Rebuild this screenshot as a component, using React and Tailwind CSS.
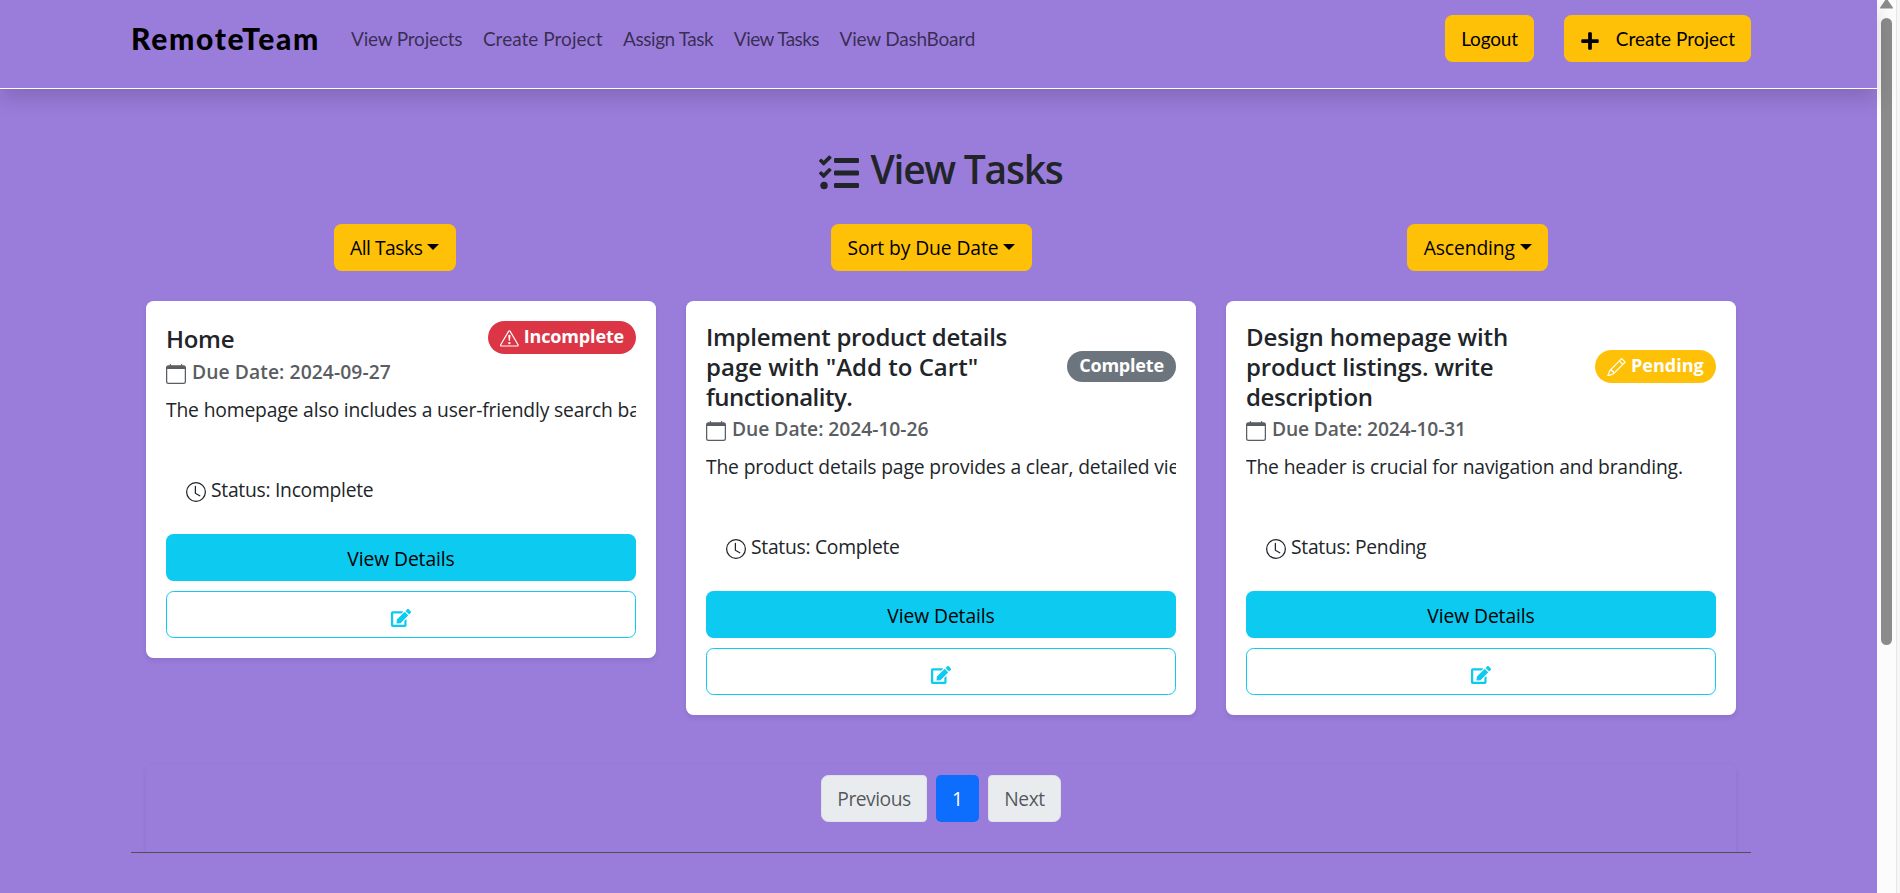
import { FaTasks, FaPlus, FaEdit } from "react-icons/fa";
import { BsCalendar, BsClock, BsExclamationTriangle, BsPencil } from "react-icons/bs";

const navLinks = [
  { label: "View Projects", tracking: "tracking-[-0.2px]" },
  { label: "Create Project", tracking: "tracking-[0.03px]" },
  { label: "Assign Task", tracking: "tracking-[-0.43px]" },
  { label: "View Tasks", tracking: "tracking-[-0.56px]" },
  { label: "View DashBoard", tracking: "tracking-[-0.22px]" },
];

const filters = [
  { label: "All Tasks", tracking: "tracking-[-0.48px]", width: "w-[122px]" },
  { label: "Sort by Due Date", tracking: "tracking-[-0.1px]", width: "w-[201px]" },
  { label: "Ascending", tracking: "tracking-[-0.1px]", width: "w-[141px]" },
];

const tasks = [
  {
    title: [{ text: "Home", tracking: "tracking-[-0.3px]" }],
    due: "2024-09-27",
    dueTracking: "tracking-[0.07px]",
    status: "Incomplete",
    badge: "bg-[#dc3545] h-[33px] w-[148px]",
    badgeTracking: "tracking-[-0.15px]",
    Icon: BsExclamationTriangle,
    description: "The homepage also includes a user-friendly search bar",
  },
  {
    title: [
      { text: "Implement product details", tracking: "tracking-[-0.3px]" },
      { text: 'page with "Add to Cart"', tracking: "tracking-[0.02px]" },
      { text: "functionality.", tracking: "tracking-[-0.5px]" },
    ],
    due: "2024-10-26",
    dueTracking: "tracking-[-0.05px]",
    status: "Complete",
    badge: "bg-[#6c757d] h-[31px] w-[109px]",
    badgeTracking: "tracking-[-0.2px]",
    Icon: null,
    description: "The product details page provides a clear, detailed view",
  },
  {
    title: [
      { text: "Design homepage with", tracking: "tracking-[-0.12px]" },
      { text: "product listings. write", tracking: "tracking-[-0.2px]" },
      { text: "description", tracking: "tracking-[-0.35px]" },
    ],
    due: "2024-10-31",
    dueTracking: "tracking-[-0.18px]",
    status: "Pending",
    badge: "bg-[#ffc107] h-[33px] w-[121px]",
    badgeTracking: "tracking-normal",
    Icon: BsPencil,
    description: "The header is crucial for navigation and branding.",
  },
];

function Navbar() {
  return (
    <header className="relative z-10 flex h-[89px] items-start border-b border-white bg-[#9a7cdb] pr-[126px] pl-[131px] pt-[15px] font-['Lato',sans-serif] text-[19px] shadow-[0_10px_20px_rgba(0,0,0,0.15)]">
      <div className="flex h-[47px] flex-1 items-center whitespace-nowrap">
        <a className="w-[220px] text-[30px] font-black tracking-[1.7px] text-black">RemoteTeam</a>
        <nav className="flex gap-[20.5px] pt-0.5 text-black/65">
          {navLinks.map((l) => (
            <a key={l.label} className={l.tracking}>{l.label}</a>
          ))}
        </nav>
      </div>
      <div className="flex gap-[30px] text-black">
        <button className="h-[47px] w-[89px] rounded-[7.5px] bg-[#ffc107] pt-0.5 tracking-[-0.2px]">Logout</button>
        <button className="flex h-[47px] w-[187px] items-center justify-between rounded-[7.5px] bg-[#ffc107] pr-4 pl-4">
          <FaPlus className="mt-1 size-5" />
          <span className="pt-0.5">Create Project</span>
        </button>
      </div>
    </header>
  );
}

function TaskCard({ task }) {
  const { Icon } = task;
  return (
    <article className="rounded-[7.5px] bg-white p-5 shadow-[0_2.5px_5px_rgba(0,0,0,0.075)]">
      <div className="flex items-center justify-between">
        <h5 className="text-[24px] leading-[30px] font-semibold">
          {task.title.map((t) => (
            <span key={t.text} className={`block translate-y-px whitespace-nowrap ${t.tracking}`}>{t.text}</span>
          ))}
        </h5>
        <span className={`flex items-center justify-center gap-[5px] rounded-full text-[18px] font-bold text-white ${task.badge}`}>
          {Icon && <Icon className="mt-0.5 size-[18.75px]" />}
          <span className={`pb-0.5 ${task.badgeTracking}`}>{task.status}</span>
        </span>
      </div>
      <div className={`mt-1.5 flex h-6 items-center gap-1.5 font-semibold text-[#5a5d61] ${task.dueTracking}`}>
        <BsCalendar className="mt-1 size-5" />
        <span>Due Date: {task.due}</span>
      </div>
      <p className="mt-[11px] h-[30px] overflow-hidden leading-[30px] tracking-[-0.16px] whitespace-nowrap">{task.description}</p>
      <div className="mt-[50px] flex h-[30px] items-center gap-[5px] pl-5 tracking-[-0.27px]">
        <BsClock className="mt-1 size-5" />
        <span>Status: {task.status}</span>
      </div>
      <div className="mt-[29px] flex flex-col gap-2.5">
        <button className="h-[47px] rounded-[7.5px] bg-[#0dcaf0] pt-[3px] tracking-[-0.1px] text-black">View Details</button>
        <button className="flex h-[47px] items-center justify-center rounded-[7.5px] border border-[#0dcaf0] pt-1.5 text-[#0dcaf0]">
          <FaEdit className="size-5" />
        </button>
      </div>
    </article>
  );
}

function Scrollbar() {
  return (
    <div className="flex w-[23px] shrink-0 bg-[#fcfcfc]">
      <div className="flex w-5 flex-col items-center border-r border-[#e6e6e6]">
        <svg viewBox="0 0 13 9" className="h-[9px] w-[13px] fill-[#8b8b8b]">
          <path d="M5.3 0h2.4l5 7.2c.5.8.2 1.4-.7 1.4H1c-.9 0-1.200-.6-.7-1.400z" />
        </svg>
        <div className="mt-[9px] h-[627px] w-[11px] rounded-full bg-[#8b8b8b]" />
      </div>
      <div className="flex-1 bg-[#f7f7f7]" />
    </div>
  );
}

export default function App() {
  return (
    <div className="flex h-[893px] w-[1900px] overflow-hidden font-['Open_Sans',sans-serif] text-[19.3px] text-[#212529]">
      <div className="w-[1877px] bg-[#9a7cdb]">
        <Navbar />
        <main className="ml-[131px] w-[1620px] border-b border-[#4d5154] px-[15px]">
          <h1 className="flex h-[135px] items-start justify-center gap-[11px] pt-[55px] text-[39px] leading-[50px] font-semibold tracking-[-1.25px]">
            <FaTasks className="mt-[9px] size-10" />
            View Tasks
          </h1>
          <div className="flex justify-around">
            {filters.map((f) => (
              <button key={f.label} className={`flex h-[47px] items-center justify-center gap-[5px] rounded-[7.5px] bg-[#ffc107] text-black ${f.width}`}>
                <span className={`pt-[1.5px] ${f.tracking}`}>{f.label}</span>
                <span className="mb-px border-x-[6px] border-t-[6px] border-x-transparent border-t-black" />
              </button>
            ))}
          </div>
          <div className="mt-[30px] grid h-[414px] grid-cols-3 items-start gap-[30px]">
            {tasks.map((t) => (
              <TaskCard key={t.due} task={t} />
            ))}
          </div>
          <div className="mt-[49px] flex h-[88px] items-start justify-center gap-[9px] rounded-t-[7.5px] pt-[11px] shadow-[0_2.5px_5px_rgba(0,0,0,0.075)] [clip-path:inset(-10px_-10px_0_-10px)]">
            <button className="h-[47px] w-[106px] rounded-l-[7.5px] rounded-r-[4px] border border-[#dee2e6] bg-[#e9ecef] pt-0.5 tracking-[-0.5px] text-[#212529]/75">Previous</button>
            <button className="h-[47px] w-[43px] rounded-[5px] bg-[#0d6efd] pt-0.5 text-white">1</button>
            <button className="h-[47px] w-[73px] rounded-l-[4px] rounded-r-[7.5px] border border-[#dee2e6] bg-[#e9ecef] pt-0.5 tracking-[-0.5px] text-[#212529]/75">Next</button>
          </div>
        </main>
      </div>
      <Scrollbar />
    </div>
  );
}
